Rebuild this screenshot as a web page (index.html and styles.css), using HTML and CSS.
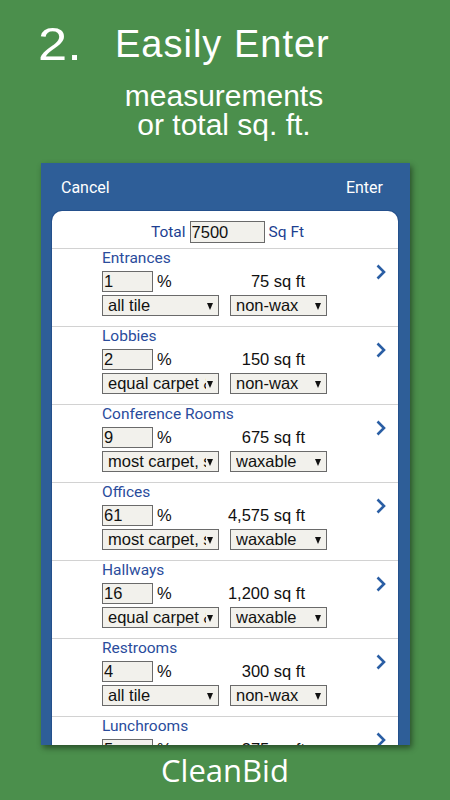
FILE: index.html
```html
<!DOCTYPE html>
<html>
<head>
<meta charset="utf-8">
<link rel="stylesheet" href="styles.css">
</head>
<body>
<div class="page">
  <div class="headline">
    <span class="step">2.</span>
    <span class="title">Easily Enter</span>
  </div>
  <div class="subtitle">measurements<br>or total sq. ft.</div>

  <div class="panel">
    <div class="bar">
      <span>Cancel</span>
      <span>Enter</span>
    </div>
    <div class="card">
      <div class="total">
        <span class="total-label">Total</span>
        <span class="field total-field">7500</span>
        <span class="total-label">Sq Ft</span>
      </div>

      <div class="row">
        <div class="row-body">
          <div class="row-title">Entrances</div>
          <div class="line">
            <span class="field pct">1</span><span class="pct-sign">%</span><span class="sqft">75 sq ft</span>
          </div>
          <div class="line selects">
            <span class="select sel-a"><span class="sel-text">all tile</span><span class="arrow"></span></span>
            <span class="select sel-b"><span class="sel-text">non-wax</span><span class="arrow"></span></span>
          </div>
        </div>
        <svg class="chev" width="12" height="16" viewBox="0 0 12 16"><path d="M2.5 1.5 L9 8 L2.5 14.5" fill="none" stroke="#2a5ea4" stroke-width="2.6"/></svg>
      </div>

      <div class="row">
        <div class="row-body">
          <div class="row-title">Lobbies</div>
          <div class="line">
            <span class="field pct">2</span><span class="pct-sign">%</span><span class="sqft">150 sq ft</span>
          </div>
          <div class="line selects">
            <span class="select sel-a"><span class="sel-text">equal carpet &amp; tile</span><span class="arrow"></span></span>
            <span class="select sel-b"><span class="sel-text">non-wax</span><span class="arrow"></span></span>
          </div>
        </div>
        <svg class="chev" width="12" height="16" viewBox="0 0 12 16"><path d="M2.5 1.5 L9 8 L2.5 14.5" fill="none" stroke="#2a5ea4" stroke-width="2.6"/></svg>
      </div>

      <div class="row">
        <div class="row-body">
          <div class="row-title">Conference Rooms</div>
          <div class="line">
            <span class="field pct">9</span><span class="pct-sign">%</span><span class="sqft">675 sq ft</span>
          </div>
          <div class="line selects">
            <span class="select sel-a"><span class="sel-text">most carpet, some tile</span><span class="arrow"></span></span>
            <span class="select sel-b"><span class="sel-text">waxable</span><span class="arrow"></span></span>
          </div>
        </div>
        <svg class="chev" width="12" height="16" viewBox="0 0 12 16"><path d="M2.5 1.5 L9 8 L2.5 14.5" fill="none" stroke="#2a5ea4" stroke-width="2.6"/></svg>
      </div>

      <div class="row">
        <div class="row-body">
          <div class="row-title">Offices</div>
          <div class="line">
            <span class="field pct">61</span><span class="pct-sign">%</span><span class="sqft">4,575 sq ft</span>
          </div>
          <div class="line selects">
            <span class="select sel-a"><span class="sel-text">most carpet, some tile</span><span class="arrow"></span></span>
            <span class="select sel-b"><span class="sel-text">waxable</span><span class="arrow"></span></span>
          </div>
        </div>
        <svg class="chev" width="12" height="16" viewBox="0 0 12 16"><path d="M2.5 1.5 L9 8 L2.5 14.5" fill="none" stroke="#2a5ea4" stroke-width="2.6"/></svg>
      </div>

      <div class="row">
        <div class="row-body">
          <div class="row-title">Hallways</div>
          <div class="line">
            <span class="field pct">16</span><span class="pct-sign">%</span><span class="sqft">1,200 sq ft</span>
          </div>
          <div class="line selects">
            <span class="select sel-a"><span class="sel-text">equal carpet &amp; tile</span><span class="arrow"></span></span>
            <span class="select sel-b"><span class="sel-text">waxable</span><span class="arrow"></span></span>
          </div>
        </div>
        <svg class="chev" width="12" height="16" viewBox="0 0 12 16"><path d="M2.5 1.5 L9 8 L2.5 14.5" fill="none" stroke="#2a5ea4" stroke-width="2.6"/></svg>
      </div>

      <div class="row">
        <div class="row-body">
          <div class="row-title">Restrooms</div>
          <div class="line">
            <span class="field pct">4</span><span class="pct-sign">%</span><span class="sqft">300 sq ft</span>
          </div>
          <div class="line selects">
            <span class="select sel-a"><span class="sel-text">all tile</span><span class="arrow"></span></span>
            <span class="select sel-b"><span class="sel-text">non-wax</span><span class="arrow"></span></span>
          </div>
        </div>
        <svg class="chev" width="12" height="16" viewBox="0 0 12 16"><path d="M2.5 1.5 L9 8 L2.5 14.5" fill="none" stroke="#2a5ea4" stroke-width="2.6"/></svg>
      </div>

      <div class="row">
        <div class="row-body">
          <div class="row-title">Lunchrooms</div>
          <div class="line">
            <span class="field pct">5</span><span class="pct-sign">%</span><span class="sqft">375 sq ft</span>
          </div>
          <div class="line selects">
            <span class="select sel-a"><span class="sel-text">most tile</span><span class="arrow"></span></span>
            <span class="select sel-b"><span class="sel-text">waxable</span><span class="arrow"></span></span>
          </div>
        </div>
        <svg class="chev" width="12" height="16" viewBox="0 0 12 16"><path d="M2.5 1.5 L9 8 L2.5 14.5" fill="none" stroke="#2a5ea4" stroke-width="2.6"/></svg>
      </div>
    </div>
  </div>

  <div class="brand">CleanBid</div>
</div>
</body>
</html>
```

FILE: styles.css
```css
html, body {
  margin: 0;
  padding: 0;
}
body {
  background: #4b8f4c;
  width: 450px;
  height: 800px;
  overflow: hidden;
}
.page {
  display: flex;
  flex-direction: column;
  width: 450px;
  height: 800px;
}
.headline {
  display: flex;
  align-items: flex-start;
  padding: 21px 0 0 38px;
  height: 46px;
  color: #fff;
  font-family: "Liberation Sans", Arial, sans-serif;
}
.step {
  display: inline-block;
  font-size: 46px;
  line-height: 46px;
  transform: scaleX(1.14);
  transform-origin: left center;
  width: 77px;
}
.title {
  font-size: 38px;
  line-height: 38px;
  letter-spacing: 1px;
  margin-top: 4px;
}
.subtitle {
  margin-top: 14px;
  text-align: center;
  color: #fff;
  font-family: "Liberation Sans", Arial, sans-serif;
  font-size: 30px;
  line-height: 29px;
  padding-right: 2px;
}
.panel {
  margin: 24px 40px 0 41px;
  height: 582px;
  background: #2e5e98;
  display: flex;
  flex-direction: column;
  box-shadow: 2px 3px 6px rgba(0, 0, 0, 0.45);
  overflow: hidden;
}
.bar {
  height: 48px;
  flex: none;
  display: flex;
  align-items: center;
  justify-content: space-between;
  padding: 0 27px 0 20px;
  color: #fff;
  font-family: Roboto, "Noto Sans", sans-serif;
  font-size: 16px;
}
.card {
  flex: 1;
  margin: 0 12px 0 11px;
  background: #fff;
  border-radius: 10px 10px 0 0;
  overflow: hidden;
  box-shadow: 0 0 0 1px #24508c;
}
.total {
  height: 37px;
  box-sizing: border-box;
  padding: 10px 0 0 5px;
  display: flex;
  align-items: flex-start;
  justify-content: center;
  gap: 4px;
  font-family: Roboto, "Noto Sans", sans-serif;
  font-size: 15.5px;
  color: #1d3f91;
}
.total-label {
  line-height: 22px;
}
.field {
  box-sizing: border-box;
  display: inline-block;
  background: #f2f1ec;
  border: 1px solid #6a6a6a;
  font-family: "Liberation Sans", Arial, sans-serif;
  font-size: 16.5px;
  color: #111;
  padding-left: 1px;
}
.total-field {
  width: 75px;
  height: 22px;
  line-height: 20px;
}
.row {
  border-top: 1px solid #d2d2d2;
  height: 77px;
  display: flex;
  padding-left: 50px;
}
.row-body {
  flex: none;
  width: 240px;
}
.row-title {
  font-family: Roboto, "Noto Sans", sans-serif;
  font-size: 15.5px;
  line-height: 18px;
  color: #2a4c9c;
}
.line {
  display: flex;
  align-items: center;
  margin-top: 4px;
  font-family: "Liberation Sans", Arial, sans-serif;
  font-size: 16.5px;
  color: #111;
}
.pct {
  width: 51px;
  height: 21px;
  line-height: 19px;
}
.pct-sign {
  margin-left: 4px;
}
.sqft {
  margin-left: auto;
  margin-right: 37px;
}
.selects {
  margin-top: 3px;
  gap: 11px;
}
.select {
  box-sizing: border-box;
  display: flex;
  align-items: center;
  height: 21px;
  background: #f2f1ec;
  border: 1px solid #6a6a6a;
  padding: 0 5px 0 5px;
}
.sel-a {
  width: 117px;
}
.sel-b {
  width: 97px;
}
.sel-text {
  flex: 1;
  min-width: 0;
  overflow: hidden;
  white-space: nowrap;
  line-height: 19px;
}
.arrow {
  flex: none;
  width: 0;
  height: 0;
  border-left: 3px solid transparent;
  border-right: 3px solid transparent;
  border-top: 7px solid #111;
  margin-left: 1px;
  margin-top: 1px;
}
.chev {
  flex: none;
  margin: 15px 0 0 33px;
}
.brand {
  margin-top: 10px;
  text-align: center;
  color: #fff;
  font-family: "Open Sans", "Noto Sans", sans-serif;
  font-size: 31px;
  line-height: 31px;
}
```
